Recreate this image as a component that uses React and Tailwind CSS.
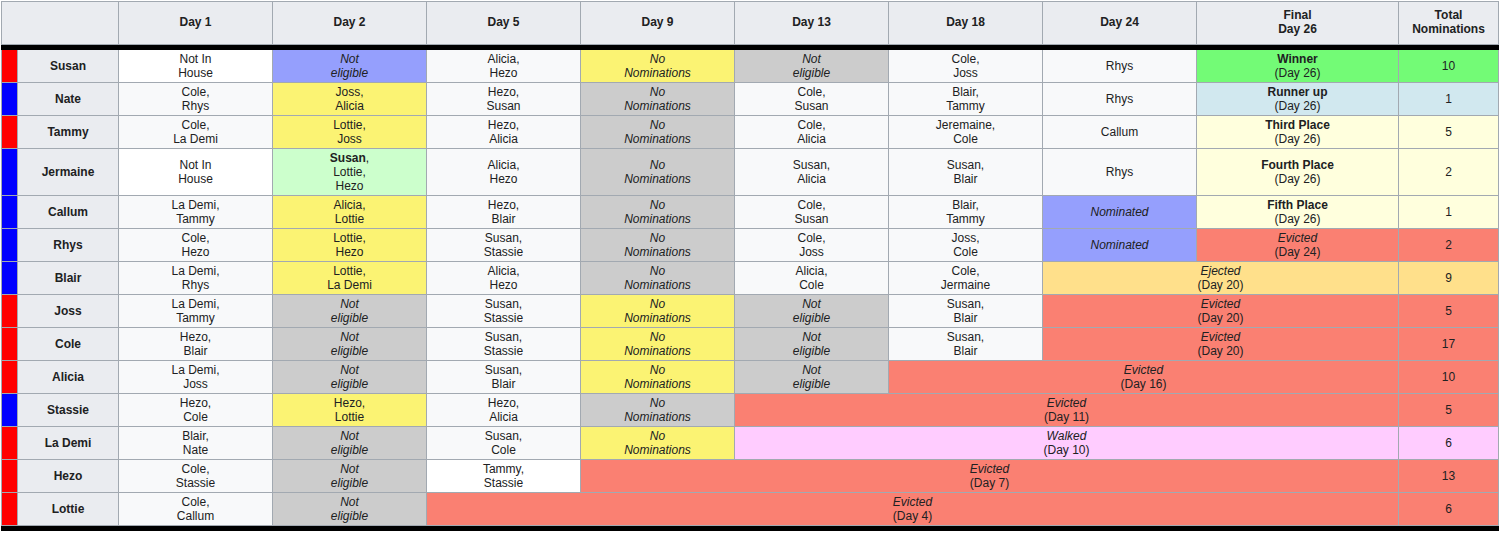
const BG = {
  d: 'bg-[#f8f9fa]',
  w: 'bg-white',
  y: 'bg-[#fbf373]',
  g: 'bg-[#cccccc]',
  b: 'bg-[#959ffd]',
  win: 'bg-[#73fb76]',
  run: 'bg-[#d1e8ef]',
  pl: 'bg-[#ffffdd]',
  ev: 'bg-[#fa8072]',
  ej: 'bg-[#ffe08b]',
  wk: 'bg-[#ffccff]',
  gr: 'bg-[#ccffcc]',
};

// cell helpers
const n = (a, b, bg = 'd') => ({ bg, lines: [<>{a},</>, <>{b}</>] });
const nih = () => ({ bg: 'w', lines: ['Not In', 'House'] });
const ne = (bg = 'g') => ({ bg, lines: [<i>Not</i>, <i>eligible</i>] });
const nn = (bg = 'g') => ({ bg, lines: [<i>No</i>, <i>Nominations</i>] });
const one = (a) => ({ bg: 'd', lines: [a] });
const nom = () => ({ bg: 'b', lines: [<i>Nominated</i>] });
const place = (label, bg) => ({ bg, lines: [<b>{label}</b>, '(Day 26)'] });
const out = (label, day, bg = 'ev', span = 1) => ({ bg, span, lines: [<i>{label}</i>, `(Day ${day})`] });

const rows = [
  { name: 'Susan', c: 'red', cells: [nih(), ne('b'), n('Alicia', 'Hezo'), nn('y'), ne(), n('Cole', 'Joss'), one('Rhys'), place('Winner', 'win')], total: [10, 'win'] },
  { name: 'Nate', c: 'blue', cells: [n('Cole', 'Rhys'), n('Joss', 'Alicia', 'y'), n('Hezo', 'Susan'), nn(), n('Cole', 'Susan'), n('Blair', 'Tammy'), one('Rhys'), place('Runner up', 'run')], total: [1, 'run'] },
  { name: 'Tammy', c: 'red', cells: [n('Cole', 'La Demi'), n('Lottie', 'Joss', 'y'), n('Hezo', 'Alicia'), nn(), n('Cole', 'Alicia'), n('Jeremaine', 'Cole'), one('Callum'), place('Third Place', 'pl')], total: [5, 'pl'] },
  { name: 'Jermaine', c: 'blue', cells: [nih(), { bg: 'gr', lines: [<><b>Susan</b>,</>, 'Lottie,', 'Hezo'] }, n('Alicia', 'Hezo'), nn(), n('Susan', 'Alicia'), n('Susan', 'Blair'), one('Rhys'), place('Fourth Place', 'pl')], total: [2, 'pl'] },
  { name: 'Callum', c: 'blue', cells: [n('La Demi', 'Tammy'), n('Alicia', 'Lottie', 'y'), n('Hezo', 'Blair'), nn(), n('Cole', 'Susan'), n('Blair', 'Tammy'), nom(), place('Fifth Place', 'pl')], total: [1, 'pl'] },
  { name: 'Rhys', c: 'blue', cells: [n('Cole', 'Hezo'), n('Lottie', 'Hezo', 'y'), n('Susan', 'Stassie'), nn(), n('Cole', 'Joss'), n('Joss', 'Cole'), nom(), out('Evicted', 24)], total: [2, 'ev'] },
  { name: 'Blair', c: 'blue', cells: [n('La Demi', 'Rhys'), n('Lottie', 'La Demi', 'y'), n('Alicia', 'Hezo'), nn(), n('Alicia', 'Cole'), n('Cole', 'Jermaine'), out('Ejected', 20, 'ej', 2)], total: [9, 'ej'] },
  { name: 'Joss', c: 'red', cells: [n('La Demi', 'Tammy'), ne(), n('Susan', 'Stassie'), nn('y'), ne(), n('Susan', 'Blair'), out('Evicted', 20, 'ev', 2)], total: [5, 'ev'] },
  { name: 'Cole', c: 'red', cells: [n('Hezo', 'Blair'), ne(), n('Susan', 'Stassie'), nn('y'), ne(), n('Susan', 'Blair'), out('Evicted', 20, 'ev', 2)], total: [17, 'ev'] },
  { name: 'Alicia', c: 'red', cells: [n('La Demi', 'Joss'), ne(), n('Susan', 'Blair'), nn('y'), ne(), out('Evicted', 16, 'ev', 3)], total: [10, 'ev'] },
  { name: 'Stassie', c: 'blue', cells: [n('Hezo', 'Cole'), n('Hezo', 'Lottie', 'y'), n('Hezo', 'Alicia'), nn(), out('Evicted', 11, 'ev', 4)], total: [5, 'ev'] },
  { name: 'La Demi', c: 'red', cells: [n('Blair', 'Nate'), ne(), n('Susan', 'Cole'), nn('y'), out('Walked', 10, 'wk', 4)], total: [6, 'wk'] },
  { name: 'Hezo', c: 'red', cells: [n('Cole', 'Stassie'), ne(), n('Tammy', 'Stassie', 'w'), out('Evicted', 7, 'ev', 5)], total: [13, 'ev'] },
  { name: 'Lottie', c: 'red', cells: [n('Cole', 'Callum'), ne(), out('Evicted', 4, 'ev', 6)], total: [6, 'ev'] },
];

const days = ['Day 1', 'Day 2', 'Day 5', 'Day 9', 'Day 13', 'Day 18', 'Day 24'];
const cellBorder = 'border border-[#a2a9b1]';
const headCell = `${cellBorder} px-[5px] pt-[6px] pb-[8px] font-bold`;
const bodyPad = 'px-[5px] py-[2px]';

function BlackBar() {
  return (
    <tr>
      <td colSpan={11} className="h-[5px] p-0 bg-black border border-black" />
    </tr>
  );
}

export default function App() {
  return (
    <div className="pt-px pl-px font-['Liberation_Sans',Arial,sans-serif] text-[12px] leading-[14px] text-[#202122] bg-white">
      <table className="table-fixed border-collapse w-[1498px] text-center">
        <colgroup>
          <col className="w-[16px]" />
          <col className="w-[101px]" />
          {days.map((d) => <col key={d} className="w-[154px]" />)}
          <col className="w-[202px]" />
          <col className="w-[100px]" />
        </colgroup>
        <thead>
          <tr className="bg-[#eaecf0]">
            <th colSpan={2} className={headCell} />
            {days.map((d) => (
              <th key={d} className={headCell}>{d}</th>
            ))}
            <th className={headCell}>Final<br />Day 26</th>
            <th className={headCell}>Total<br />Nominations</th>
          </tr>
        </thead>
        <tbody>
          <BlackBar />
          {rows.map((r) => (
            <tr key={r.name}>
              <td className={`${cellBorder} p-0 ${r.c === 'red' ? 'bg-[#ff0000]' : 'bg-[#0000ff]'}`} />
              <th className={`${cellBorder} bg-[#eaecf0] ${bodyPad} font-bold`}>{r.name}</th>
              {r.cells.map((cell, i) => (
                <td key={i} colSpan={cell.span || 1} className={`${cellBorder} ${BG[cell.bg]} ${bodyPad}`}>
                  {cell.lines.map((l, j) => (
                    <div key={j}>{l}</div>
                  ))}
                </td>
              ))}
              <td className={`${cellBorder} ${BG[r.total[1]]} ${bodyPad}`}>{r.total[0]}</td>
            </tr>
          ))}
          <BlackBar />
        </tbody>
      </table>
    </div>
  );
}
